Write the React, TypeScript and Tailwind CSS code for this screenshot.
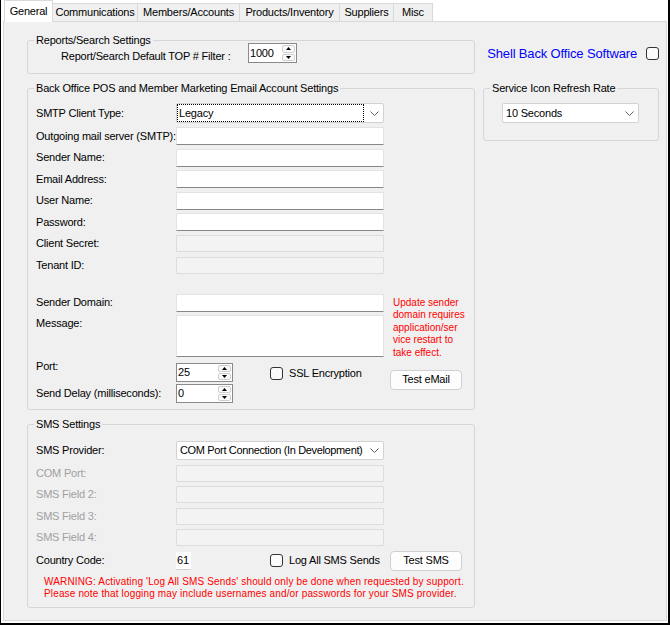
import React from "react";

const Group: React.FC<{ title: string; className?: string; children?: React.ReactNode }> = ({
  title,
  className = "",
  children,
}) => (
  <fieldset className={`border border-[#d5d5d5] rounded-[3px] px-[8px] ${className}`}>
    <legend className="px-[2px] -ml-[2px] leading-[13px]">{title}</legend>
    {children}
  </fieldset>
);

const Chevron = () => (
  <svg width="9" height="5" viewBox="0 0 9 5" className="shrink-0">
    <path d="M0.5 0.5 L4.5 4.5 L8.5 0.5" fill="none" stroke="#606060" strokeWidth="1" />
  </svg>
);

const Combo: React.FC<{ value: string; w: string; h?: string; focus?: boolean; textPad?: string }> = ({
  value,
  w,
  h = "h-[20px]",
  focus,
  textPad = "pl-[1px]",
}) => (
  <div className={`${w} ${h} bg-white border border-[#d2d2d2] rounded-[2px] flex items-center pr-[4px]`}>
    <div
      className={`flex-1 min-w-0 h-full flex items-center mr-[6px] whitespace-nowrap overflow-hidden ${textPad} border ${
        focus ? "border-dotted border-black" : "border-transparent"
      }`}
    >
      {value}
    </div>
    <Chevron />
  </div>
);

const TextBox: React.FC<{ disabled?: boolean; h?: string }> = ({ disabled, h }) =>
  disabled ? (
    <div className={`w-[208px] ${h ?? "h-[17px]"} bg-[#f3f3f3] border border-[#dcdcdc] rounded-[1px]`} />
  ) : (
    <div className={`w-[208px] ${h ?? "h-[18px]"} bg-white border border-[#e3e3e3] border-b-[#878787] rounded-[1px]`} />
  );

const Spin: React.FC<{ value: string; w: string; h: string }> = ({ value, w, h }) => (
  <div className={`${w} ${h} flex bg-white border border-[#8a8a8a]`}>
    <span className="flex-1 flex items-center pl-[1px]">{value}</span>
    <div className="w-[15px] flex flex-col gap-[1px] p-[1px]">
      <div className="flex-1 flex items-center justify-center border border-[#cfcfcf] rounded-[2px] bg-[#fafafa]">
        <svg width="5" height="3" viewBox="0 0 5 3">
          <path d="M0 3 L2.5 0 L5 3 Z" fill="#000" />
        </svg>
      </div>
      <div className="flex-1 flex items-center justify-center border border-[#cfcfcf] rounded-[2px] bg-[#fafafa]">
        <svg width="5" height="3" viewBox="0 0 5 3">
          <path d="M0 0 L2.5 3 L5 0 Z" fill="#000" />
        </svg>
      </div>
    </div>
  </div>
);

const Check: React.FC<{ label?: string; className?: string }> = ({ label, className = "" }) => (
  <div className={`flex items-center gap-[6px] ${className}`}>
    <span className="w-[13px] h-[13px] shrink-0 border border-[#333] rounded-[3px] bg-[#fbfbfb]" />
    {label && <span>{label}</span>}
  </div>
);

const Button: React.FC<{ children: React.ReactNode; className?: string }> = ({ children, className = "" }) => (
  <div
    className={`w-[72px] h-[20px] flex items-center justify-center bg-[#fdfdfd] border border-[#d0d0d0] rounded-[4px] ${className}`}
  >
    {children}
  </div>
);

const tabs = [
  { name: "Communications", w: "w-[85px]" },
  { name: "Members/Accounts", w: "w-[102px]" },
  { name: "Products/Inventory", w: "w-[100px]" },
  { name: "Suppliers", w: "w-[54px]" },
  { name: "Misc", w: "w-[39px]" },
];

const mailRows = [
  { label: "Outgoing mail server (SMTP):" },
  { label: "Sender Name:" },
  { label: "Email Address:" },
  { label: "User Name:" },
  { label: "Password:" },
  { label: "Client Secret:", disabled: true },
  { label: "Tenant ID:", disabled: true },
];

const smsRows = ["COM Port:", "SMS Field 2:", "SMS Field 3:", "SMS Field 4:"];

export default function App() {
  return (
    <div className="w-[670px] h-[625px] bg-white border-l border-r-2 border-b-2 border-black flex flex-col font-['Liberation_Sans',Arial,sans-serif] text-[11px] leading-[13px] tracking-[-0.2px] text-black">
      {/* Tab strip */}
      <div className="relative z-10 flex items-end h-[21px] pl-[3px] shrink-0">
        <div className="w-[49px] h-[22px] -mb-[1px] flex items-center justify-center bg-white border border-b-0 border-[#d9d9d9]">
          General
        </div>
        {tabs.map((t) => (
          <div
            key={t.name}
            className={`${t.w} h-[18px] flex items-center justify-center bg-[#f0f0f0] border-t border-r border-[#d9d9d9]`}
          >
            {t.name}
          </div>
        ))}
      </div>

      {/* Tab page */}
      <div className="flex-1 ml-[2px] mr-[1px] mb-[2px] bg-[#f0f0f0] border border-[#d9d9d9] pl-[23px] pt-[11.5px]">
        <div className="grid grid-cols-[448px_176px] gap-x-[8px] gap-y-[7.5px] items-start">
          <Group title="Reports/Search Settings" className="pb-[10px]">
            <div className="flex items-end -mt-[3.5px] pl-[25px]">
              <span className="w-[187px]">Report/Search Default TOP # Filter :</span>
              <Spin value="1000" w="w-[49px]" h="h-[20px]" />
            </div>
          </Group>

          <div className="self-center flex items-center justify-end gap-[9px]">
            <span className="text-[13px] tracking-[-0.15px] text-[#0000ff]">Shell Back Office Software</span>
            <Check />
          </div>

          <div className="flex flex-col gap-[8.5px]">
            <Group title="Back Office POS and Member Marketing Email Account Settings" className="pt-[8.5px] pb-[6px]">
              <div className="flex items-start h-[24px]">
                <span className="w-[140px] h-[20px] flex items-center">SMTP Client Type:</span>
                <Combo value="Legacy" w="w-[208px]" focus />
              </div>
              {mailRows.map((r) => (
                <div key={r.label} className="flex items-start h-[21.6px]">
                  <span className={`w-[140px] flex items-center ${r.disabled ? "h-[17px]" : "h-[18px]"}`}>
                    {r.label}
                  </span>
                  <TextBox disabled={r.disabled} />
                </div>
              ))}

              <div className="flex items-start h-[63.5px] mt-[15.8px]">
                <div className="flex flex-col w-[348px]">
                  <div className="flex items-center h-[18px]">
                    <span className="w-[140px]">Sender Domain:</span>
                    <TextBox />
                  </div>
                  <div className="flex items-start mt-[3.5px]">
                    <span className="w-[140px] pt-[2px]">Message:</span>
                    <TextBox h="h-[42px]" />
                  </div>
                </div>
                <p className="ml-[9px] mt-[3px] text-[10px] leading-[12.5px] tracking-normal text-[#ff0000]">
                  Update sender
                  <br />
                  domain requires
                  <br />
                  application/ser
                  <br />
                  vice restart to
                  <br />
                  take effect.
                </p>
              </div>

              <div className="flex items-start mt-[5.5px]">
                <div className="flex flex-col gap-[2px]">
                  <div className="flex items-start">
                    <span className="w-[140px] -mt-[3px]">Port:</span>
                    <Spin value="25" w="w-[57px]" h="h-[19px]" />
                  </div>
                  <div className="flex items-center">
                    <span className="w-[140px]">Send Delay (milliseconds):</span>
                    <Spin value="0" w="w-[57px]" h="h-[19px]" />
                  </div>
                </div>
                <Check label="SSL Encryption" className="ml-[37px] mt-[4px] w-[120px]" />
                <Button className="mt-[7px]">Test eMail</Button>
              </div>
            </Group>

            <Group title="SMS Settings" className="pt-[10px] pb-[7px]">
              <div className="flex items-start h-[23.6px]">
                <span className="w-[140px] h-[19px] flex items-center">SMS Provider:</span>
                <div className="tracking-[-0.35px]">
                  <Combo value="COM Port Connection (In Development)" w="w-[208px]" h="h-[19px]" textPad="pl-[2px]" />
                </div>
              </div>
              {smsRows.map((l) => (
                <div key={l} className="flex items-start h-[21.3px]">
                  <span className="w-[140px] h-[17px] flex items-center text-[#a0a0a0]">{l}</span>
                  <TextBox disabled />
                </div>
              ))}
              <div className="flex items-center h-[19px] mt-[1.2px]">
                <span className="w-[140px]">Country Code:</span>
                <div className="w-[15px] h-[18px] flex items-center pl-[1px] bg-white border-b border-[#d0d0d0]">61</div>
                <Check label="Log All SMS Sends" className="ml-[79px] w-[120px]" />
                <Button>Test SMS</Button>
              </div>
              <p className="mt-[5.6px] ml-[8px] text-[10px] leading-[12px] tracking-[0.15px] text-[#ff0000]">
                WARNING: Activating 'Log All SMS Sends' should only be done when requested by support.
                <br />
                Please note that logging may include usernames and/or passwords for your SMS provider.
              </p>
            </Group>
          </div>

          <Group title="Service Icon Refresh Rate" className="pt-[8.5px] pb-[17px]">
            <div className="pl-[10px]">
              <Combo value="10 Seconds" w="w-[137px]" textPad="pl-[2px]" />
            </div>
          </Group>
        </div>
      </div>
    </div>
  );
}
